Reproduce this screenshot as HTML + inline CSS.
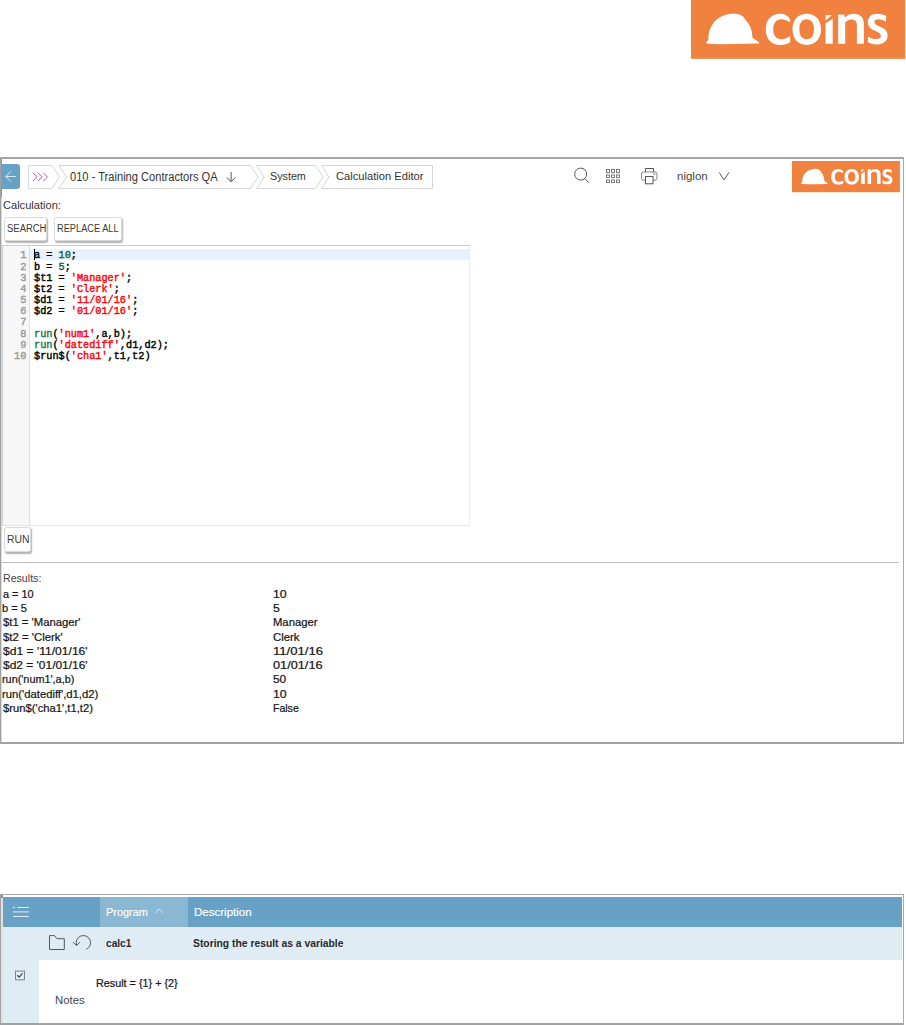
<!DOCTYPE html>
<html lang="en">
<head>
<meta charset="utf-8">
<title>Calculation Editor</title>
<style>
  html, body { margin: 0; padding: 0; background: #fff; }
  body { width: 906px; height: 1025px; position: relative; overflow: hidden;
         font-family: "Liberation Sans", sans-serif; }
  .abs, .t, .ln, .cl, svg.i { position: absolute; }
  .t { white-space: pre; line-height: 1; transform-origin: 0 0; display: block; }
  .ln, .cl { font-family: "Liberation Mono", monospace; font-weight: 400; -webkit-text-stroke: .4px currentColor; font-size: 10.22px;
             line-height: 1; white-space: pre; display: block; }
  .ln { right: 879.7px; color: #999; text-align: right; }
  .cl { left: 34.0px; color: #000; }
  .cl .n { color: #116644; }
  .cl .s { color: #f00; }
  .cl .f { color: #0a8050; }
  .btn { position: absolute; box-sizing: border-box; background: #fff; border: 1px solid #dadada;
         border-radius: 2.5px; box-shadow: 1px 1.4px 1.4px rgba(0,0,0,.3); }
  svg.i { overflow: visible; }
</style>
</head>
<body>

<!-- ============ page header logo ============ -->
<svg class="i" style="left:691px;top:0" width="215" height="59" viewBox="0 0 215 59">
  <rect x="0" y="-1" width="214.2" height="59.8" fill="#f0813f"/>
  <use href="#logo" transform="translate(15.3 13.7) scale(1)"/>
</svg>

<!-- ============ screenshot 1 : Calculation Editor ============ -->
<main>
<div class="abs" style="left:0;top:157px;width:904px;height:2px;background:#a6a6a6"></div>
<div class="abs" style="left:0;top:742px;width:904px;height:2px;background:#a2a2a2"></div>
<div class="abs" style="left:0;top:157px;width:1px;height:587px;background:#a2a2a2"></div>
<div class="abs" style="left:1px;top:159px;width:1px;height:583px;background:#d9d9d9"></div>
<div class="abs" style="left:903px;top:157px;width:1px;height:587px;background:#a8a8a8"></div>

<!-- nav -->
<nav>
<div class="abs" style="left:1px;top:159px;width:1.4px;height:38px;background:#67a2c6"></div>
<div class="abs" style="left:1px;top:164.2px;width:18.5px;height:24.5px;background:#67a2c6;border-radius:0 3px 3px 0"></div>
<svg class="i" style="left:0;top:157px" width="906" height="45" viewBox="0 157 906 45" fill="none">
  <!-- back arrow -->
  <path d="M5.8 176.5H16M10.9 171.3L5.7 176.5L10.9 181.6" stroke="#fff" stroke-opacity=".75" stroke-width="1"/>
  <!-- breadcrumbs -->
  <g stroke="#d6d6d6" stroke-width="1" fill="#fff">
    <path d="M28.5 165.5H52L59.5 177L52 188.5H28.5Z"/>
    <path d="M58.8 165.5H250.4L257.9 177L250.4 188.5H58.8L66.5 177Z"/>
    <path d="M256.7 165.5H315.8L323 177L315.8 188.5H256.7L264 177Z"/>
    <path d="M321.6 165.5H432.5V188.5H321.6L329 177Z"/>
  </g>
  <path d="M32.8 172.8L36.8 176.9L32.8 181M38.1 172.8L42.1 176.9L38.1 181M43.4 172.8L47.4 176.9L43.4 181" stroke="#b261cf" stroke-width="1"/>
  <path d="M231.1 172V181.6M226.8 177.4L231.1 181.8L235.4 177.4" stroke="#555" stroke-width="1"/>
  <!-- search -->
  <circle cx="580.7" cy="174.1" r="6" stroke="#555" stroke-width="1"/>
  <path d="M584.9 178.5L588.9 182.8" stroke="#555" stroke-width="1"/>
  <!-- grid -->
  <g stroke="#6e6e6e" stroke-width=".9">
    <rect x="606.5" y="169.5" width="3" height="3.2"/><rect x="611.5" y="169.5" width="3" height="3.2"/><rect x="616.5" y="169.5" width="3" height="3.2"/>
    <rect x="606.5" y="175" width="3" height="2.6"/><rect x="611.5" y="175" width="3" height="2.6"/><rect x="616.5" y="175" width="3" height="2.6"/>
    <rect x="606.5" y="180" width="3" height="2.6"/><rect x="611.5" y="180" width="3" height="2.6"/><rect x="616.5" y="180" width="3" height="2.6"/>
  </g>
  <!-- printer -->
  <g stroke="#555" stroke-width="1">
    <path d="M645.5 172V168.5H653.5V172"/>
    <rect x="641.5" y="172" width="15.5" height="8.2" rx="2" stroke="#808080"/>
    <rect x="645.5" y="176.5" width="7.5" height="7.3" fill="#fff"/>
    <path d="M653 174H655.3" stroke-width=".8"/>
  </g>
  <path d="M719.2 172.5L724.1 179.8L729 172.5" stroke="#555" stroke-width="1"/>
</svg>
<svg class="i" style="left:792px;top:161px" width="108" height="32" viewBox="0 0 108 32">
  <rect x="0" y="0" width="107.9" height="31.2" fill="#f0813f"/>
  <use href="#logo" transform="translate(9.1 7.9) scale(0.504)"/>
</svg>
</nav>

<!-- buttons -->
<div class="btn" style="left:4.3px;top:217.4px;width:43px;height:23.8px"></div>
<div class="btn" style="left:54.3px;top:217.4px;width:67.8px;height:23.8px"></div>
<div class="btn" style="left:4.3px;top:527.3px;width:26.6px;height:25.2px"></div>

<!-- editor -->
<section>
<div class="abs" style="left:2px;top:246px;width:1px;height:279px;background:#c9d1db"></div>
<div class="abs" style="left:3px;top:246px;width:26px;height:279px;background:#f7f7f7;border-right:1px solid #dfdfdf"></div>
<div class="abs" style="left:2px;top:245px;width:467.5px;height:1px;background:#cbcbcb"></div>
<div class="abs" style="left:2px;top:525px;width:467.5px;height:1px;background:#dde4ec"></div>
<div class="abs" style="left:469px;top:246px;width:1px;height:279px;background:#e9edf3"></div>
<div class="abs" style="left:30px;top:249.2px;width:439px;height:10.6px;background:#e8f2ff"></div>
<div class="abs" style="left:34px;top:249.3px;width:1px;height:10.8px;background:#000"></div>
<span class="ln" style="top:250px">1</span>
<span class="cl" style="top:250px"><span class="k">a = </span><span class="n">10</span><span class="k">;</span></span>
<span class="ln" style="top:262px">2</span>
<span class="cl" style="top:262px"><span class="k">b = </span><span class="n">5</span><span class="k">;</span></span>
<span class="ln" style="top:273px">3</span>
<span class="cl" style="top:273px"><span class="k">$t1 = </span><span class="s">'Manager'</span><span class="k">;</span></span>
<span class="ln" style="top:284px">4</span>
<span class="cl" style="top:284px"><span class="k">$t2 = </span><span class="s">'Clerk'</span><span class="k">;</span></span>
<span class="ln" style="top:295px">5</span>
<span class="cl" style="top:295px"><span class="k">$d1 = </span><span class="s">'11/01/16'</span><span class="k">;</span></span>
<span class="ln" style="top:306px">6</span>
<span class="cl" style="top:306px"><span class="k">$d2 = </span><span class="s">'01/01/16'</span><span class="k">;</span></span>
<span class="ln" style="top:317px">7</span>
<span class="ln" style="top:329px">8</span>
<span class="cl" style="top:329px"><span class="f">run</span><span class="k">(</span><span class="s">'num1'</span><span class="k">,a,b);</span></span>
<span class="ln" style="top:340px">9</span>
<span class="cl" style="top:340px"><span class="f">run</span><span class="k">(</span><span class="s">'datediff'</span><span class="k">,d1,d2);</span></span>
<span class="ln" style="top:351px">10</span>
<span class="cl" style="top:351px"><span class="k">$run$(</span><span class="s">'cha1'</span><span class="k">,t1,t2)</span></span>
</section>

<div class="abs" style="left:2px;top:562px;width:897px;height:1px;background:#bdbdbd"></div>

<!-- ============ screenshot 2 : program table ============ -->
<div class="abs" style="left:0;top:894px;width:904px;height:1px;background:#a6a6a6"></div>
<div class="abs" style="left:0;top:1023px;width:904px;height:2px;background:#a2a2a2"></div>
<div class="abs" style="left:0;top:894px;width:1px;height:131px;background:#a2a2a2"></div>
<div class="abs" style="left:1px;top:898px;width:2px;height:125px;background:#e4e0de"></div>
<div class="abs" style="left:903px;top:894px;width:1px;height:131px;background:#a8a8a8"></div>
<div class="abs" style="left:1px;top:895px;width:2px;height:3px;background:#67a2c6"></div>
<div class="abs" style="left:3px;top:897.3px;width:899px;height:30px;background:#67a2c6"></div>
<div class="abs" style="left:100px;top:897.3px;width:87.8px;height:30px;background:#8ab7d2"></div>
<div class="abs" style="left:3px;top:927.2px;width:899px;height:32.7px;background:#e0ecf3"></div>
<div class="abs" style="left:3px;top:959px;width:36.4px;height:64px;background:#e0ecf3"></div>
<svg class="i" style="left:0;top:894px" width="906" height="131" viewBox="0 894 906 131" fill="none">
  <!-- hamburger -->
  <path d="M13 907.5H15M17.3 907.5H28.8M13 911.9H28.8M13 916.4H28.8" stroke="#fff" stroke-opacity=".82" stroke-width="1"/>
  <!-- sort caret -->
  <path d="M155.3 912.9L159.2 908.9L163.1 912.9" stroke="#fff" stroke-opacity=".7" stroke-width="1"/>
  <!-- folder -->
  <path d="M49.5 935.6H54.5L57 938.7H64.3V949.5H49.5Z" stroke="#585858" stroke-width="1"/>
  <!-- undo -->
  <path d="M76.6 945.2A7.2 7.2 0 1 1 86.4 949.3" stroke="#585858" stroke-width="1"/>
  <path d="M73 942.2L76.4 945.6L79.8 942.2" stroke="#585858" stroke-width="1"/>
  <!-- checkbox -->
  <rect x="15.55" y="971.1" width="8.9" height="8.7" fill="#e6eef5" stroke="#76828b" stroke-width="1"/>
  <path d="M17.3 975.3L19.2 977.1L22.5 973.4" stroke="#4a4a4a" stroke-width="1.35"/>
</svg>
</main>

<span class="t" style="left:69.97px;top:171px;font-size:12px;font-weight:400;color:#333;transform:scaleX(0.9263)">010 - Training Contractors QA</span>
<span class="t" style="left:270.31px;top:171px;font-size:11px;font-weight:400;color:#333;transform:scaleX(0.9760)">System</span>
<span class="t" style="left:335.63px;top:171px;font-size:11px;font-weight:400;color:#333;transform:scaleX(1.0144)">Calculation Editor</span>
<span class="t" style="left:676.94px;top:171px;font-size:11px;font-weight:400;color:#444;transform:scaleX(1.0461)">niglon</span>
<span class="t" style="left:2.64px;top:200px;font-size:11px;font-weight:400;color:#333;transform:scaleX(1.0069)">Calculation:</span>
<span class="t" style="left:6.52px;top:224px;font-size:10px;font-weight:400;color:#3a3a3a;transform:scaleX(0.9467)">SEARCH</span>
<span class="t" style="left:57.04px;top:224px;font-size:10px;font-weight:400;color:#3a3a3a;transform:scaleX(0.9243)">REPLACE ALL</span>
<span class="t" style="left:6.55px;top:535px;font-size:10px;font-weight:400;color:#3a3a3a;transform:scaleX(1.0335)">RUN</span>
<span class="t" style="left:2.63px;top:573px;font-size:11px;font-weight:400;color:#444;transform:scaleX(0.9649)">Results:</span>
<span class="t" style="left:2.74px;top:589px;font-size:11px;font-weight:400;color:#151515;-webkit-text-stroke:.22px #151515;transform:scaleX(0.9903)">a = 10</span>
<span class="t" style="left:272.66px;top:589px;font-size:11px;font-weight:400;color:#151515;-webkit-text-stroke:.22px #151515;transform:scaleX(1.1215)">10</span>
<span class="t" style="left:2.49px;top:603px;font-size:11px;font-weight:400;color:#151515;-webkit-text-stroke:.22px #151515;transform:scaleX(1.0084)">b = 5</span>
<span class="t" style="left:273.11px;top:603px;font-size:11px;font-weight:400;color:#151515;-webkit-text-stroke:.22px #151515;transform:scaleX(1.1121)">5</span>
<span class="t" style="left:3.08px;top:617px;font-size:11px;font-weight:400;color:#151515;-webkit-text-stroke:.22px #151515;transform:scaleX(1.0271)">$t1 = 'Manager'</span>
<span class="t" style="left:272.68px;top:617px;font-size:11px;font-weight:400;color:#151515;-webkit-text-stroke:.22px #151515;transform:scaleX(1.0229)">Manager</span>
<span class="t" style="left:3.08px;top:632px;font-size:11px;font-weight:400;color:#151515;-webkit-text-stroke:.22px #151515;transform:scaleX(1.0346)">$t2 = 'Clerk'</span>
<span class="t" style="left:273.02px;top:632px;font-size:11px;font-weight:400;color:#151515;-webkit-text-stroke:.22px #151515;transform:scaleX(1.0348)">Clerk</span>
<span class="t" style="left:3.07px;top:646px;font-size:11px;font-weight:400;color:#151515;-webkit-text-stroke:.22px #151515;transform:scaleX(1.0979)">$d1 = '11/01/16'</span>
<span class="t" style="left:272.60px;top:646px;font-size:11px;font-weight:400;color:#151515;-webkit-text-stroke:.22px #151515;transform:scaleX(1.1922)">11/01/16</span>
<span class="t" style="left:3.07px;top:660px;font-size:11px;font-weight:400;color:#151515;-webkit-text-stroke:.22px #151515;transform:scaleX(1.0863)">$d2 = '01/01/16'</span>
<span class="t" style="left:273.10px;top:660px;font-size:11px;font-weight:400;color:#151515;-webkit-text-stroke:.22px #151515;transform:scaleX(1.1574)">01/01/16</span>
<span class="t" style="left:2.48px;top:674px;font-size:11px;font-weight:400;color:#151515;-webkit-text-stroke:.22px #151515;transform:scaleX(0.9864)">run('num1',a,b)</span>
<span class="t" style="left:273.12px;top:674px;font-size:11px;font-weight:400;color:#151515;-webkit-text-stroke:.22px #151515;transform:scaleX(1.0822)">50</span>
<span class="t" style="left:2.45px;top:689px;font-size:11px;font-weight:400;color:#151515;-webkit-text-stroke:.22px #151515;transform:scaleX(1.0251)">run('datediff',d1,d2)</span>
<span class="t" style="left:272.66px;top:689px;font-size:11px;font-weight:400;color:#151515;-webkit-text-stroke:.22px #151515;transform:scaleX(1.1215)">10</span>
<span class="t" style="left:3.08px;top:703px;font-size:11px;font-weight:400;color:#151515;-webkit-text-stroke:.22px #151515;transform:scaleX(1.0221)">$run$('cha1',t1,t2)</span>
<span class="t" style="left:272.74px;top:703px;font-size:11px;font-weight:400;color:#151515;-webkit-text-stroke:.22px #151515;transform:scaleX(0.9566)">False</span>
<span class="t" style="left:106.00px;top:907px;font-size:11px;font-weight:400;color:#fff;-webkit-text-stroke:.15px #fff;transform:scaleX(0.9938)">Program</span>
<span class="t" style="left:194.35px;top:907px;font-size:11px;font-weight:400;color:#fff;-webkit-text-stroke:.15px #fff;transform:scaleX(1.0486)">Description</span>
<span class="t" style="left:105.60px;top:938px;font-size:11px;font-weight:700;color:#2a2a2a;transform:scaleX(0.9220)">calc1</span>
<span class="t" style="left:193.40px;top:938px;font-size:11px;font-weight:700;color:#2a2a2a;transform:scaleX(0.9393)">Storing the result as a variable</span>
<span class="t" style="left:95.51px;top:978px;font-size:11px;font-weight:400;color:#151515;-webkit-text-stroke:.22px #151515;transform:scaleX(0.9820)">Result = {1} + {2}</span>
<span class="t" style="left:54.87px;top:995px;font-size:11px;font-weight:400;color:#444;transform:scaleX(1.0315)">Notes</span>

<!-- ============ logo symbol (helmet + "coins") : helmet box = 53 x 30.3 ============ -->
<svg width="0" height="0" style="position:absolute">
  <defs>
    <g id="logo" fill="#fff">
      <!-- helmet -->
      <path d="M0 28.2 L2.1 26.3 C1.6 13.5 9.5 1.2 25.5 0 C33 -0.4 37 1.6 39.3 6.2 C43.5 10.5 46 16 46.2 24 L52.8 28.6 C53 29.4 52.6 29.9 51.6 29.9 L30 30.3 L14 30.6 L2 30 C0.4 29.8 -0.3 29 0 28.2 Z"/>
      <g transform="translate(-15.1 0)">
      <!-- c -->
      <path d="M99 6.2 C97 1.6 93 0.1 89 0.1 C80 0.1 74.6 6.5 74.6 15.5 C74.6 25 80 31.2 89 31.2 C93.3 31.2 96.6 30.2 99 28.6 L99 22.4 C96.4 24.3 93.6 25.5 90.3 25.5 C85 25.5 82 21.8 82 15.5 C82 9.4 85 5.6 90.2 5.6 C93.2 5.6 95.8 6.6 98.6 8.6 Z"/>
      <!-- o -->
      <path fill-rule="evenodd" d="M115.5 0.1 C106.5 0.1 101.3 6.4 101.3 15.6 C101.3 24.9 106.5 31.2 115.5 31.2 C124.5 31.2 129.8 24.9 129.8 15.6 C129.8 6.4 124.5 0.1 115.5 0.1 Z M115.5 5.6 C120.3 5.6 122.8 9.3 122.8 15.6 C122.8 22 120.3 25.6 115.5 25.6 C110.7 25.6 108.2 22 108.2 15.6 C108.2 9.3 110.7 5.6 115.5 5.6 Z"/>
      <!-- i -->
      <path d="M134.4 1.2 H140.8 L134.4 6.8 Z M134.4 9.5 L141.5 5.1 V30 H134.4 Z"/>
      <!-- n -->
      <path d="M147 30 V0.8 H153 L153.6 4 C156 1.4 159 0.1 162.6 0.1 C169 0.1 172.7 4 172.7 10.5 V30 H165.7 V11.8 C165.7 7.8 163.8 5.8 160.4 5.8 C158 5.8 155.8 6.9 154 8.8 V30 Z"/>
      <!-- s -->
      <path d="M195 2.4 C192.6 1 189.6 0.1 186.2 0.1 C180.3 0.1 176.6 3.4 176.6 8.4 C176.6 13 179.5 15.4 184.3 17.4 C188.3 19 189.7 20.2 189.7 22.1 C189.7 24.2 188 25.3 185 25.3 C182 25.3 179.2 24.3 176.8 22.7 L176.6 28.4 C179 29.8 182 30.7 185.6 30.7 C192.2 30.7 196.4 27.4 196.4 21.8 C196.4 17.3 193.4 14.8 188.4 12.8 C184.6 11.2 183.2 10.2 183.2 8.3 C183.2 6.5 184.7 5.5 187.2 5.5 C190 5.5 192.4 6.4 194.8 8 Z"/>
      </g>
    </g>
  </defs>
</svg>
</body>
</html>
